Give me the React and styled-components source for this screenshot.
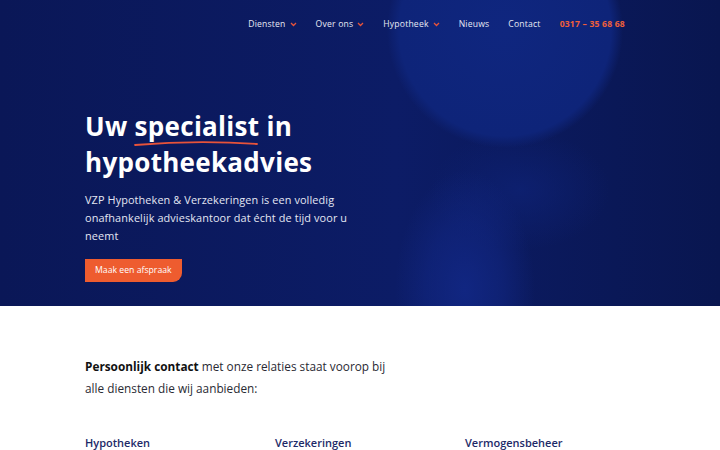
import React from "react";
import styled, { createGlobalStyle } from "styled-components";

const GlobalStyle = createGlobalStyle`
  body {
    margin: 0;
    font-family: "Open Sans", "Noto Sans", sans-serif;
    background: #fff;
  }
`;

const Hero = styled.section`
  height: 306px;
  background:
    radial-gradient(circle at 505px 30px, #0f267f 0, #0e2479 106px, rgba(14, 36, 121, 0) 118px),
    radial-gradient(ellipse 70px 120px at 465px 290px, rgba(18, 40, 135, 0.85) 0, rgba(18, 40, 135, 0.5) 55%, rgba(18, 40, 135, 0) 100%),
    radial-gradient(ellipse 90px 60px at 520px 190px, rgba(14, 34, 118, 0.7) 0, rgba(14, 34, 118, 0) 100%),
    linear-gradient(90deg, #0a1757 0%, #0c1c66 55%, #091650 100%);
  color: #fff;
  overflow: hidden;
`;

const Container = styled.div`
  width: 550px;
  margin: 0 auto;
`;

const Nav = styled.nav`
  display: flex;
  justify-content: flex-end;
  align-items: center;
  gap: 19px;
  height: 48px;
  padding-right: 10px;
  font-size: 8.6px;
`;

const NavItem = styled.a`
  display: flex;
  align-items: center;
  gap: 4px;
  color: ${({ $accent }) => ($accent ? "#f0603a" : "#e8eaf4")};
  font-weight: ${({ $accent }) => ($accent ? 700 : 500)};
  letter-spacing: 0.2px;
  text-decoration: none;
`;

const Chevron = () => (
  <svg width="7" height="5" viewBox="0 0 7 5">
    <path d="M1 1l2.5 2.5L6 1" fill="none" stroke="#e8533a" strokeWidth="1.3" />
  </svg>
);

const Intro = styled.div`
  padding-top: 60px;
`;

const Title = styled.h1`
  margin: 0;
  font-size: 26px;
  line-height: 36px;
  font-weight: 700;
  letter-spacing: 0.3px;
`;

const Marked = styled.span`
  position: relative;
  display: inline-block;

  svg {
    position: absolute;
    left: -2px;
    bottom: -3px;
  }
`;

const Lead = styled.p`
  margin: 11px 0 11px;
  width: 275px;
  font-size: 10.9px;
  line-height: 18px;
  letter-spacing: 0.1px;
  color: #e4e7f3;
`;

const Button = styled.a`
  display: inline-block;
  padding: 0 10px;
  height: 23px;
  line-height: 23px;
  background: #ee5c2f;
  color: #fff;
  font-size: 8.7px;
  font-weight: 500;
  border-radius: 0 0 9px 0;
  text-decoration: none;
`;

const Services = styled.section`
  padding-top: 49px;
`;

const Statement = styled.p`
  margin: 0;
  width: 310px;
  font-size: 11.8px;
  line-height: 22px;
  color: #2a2a33;

  strong {
    font-weight: 700;
    color: #111;
  }
`;

const Columns = styled.div`
  display: grid;
  grid-template-columns: repeat(3, 1fr);
  gap: 20px;
  margin-top: 36px;
`;

const ColumnTitle = styled.h3`
  margin: 0;
  font-size: 11px;
  font-weight: 600;
  color: #1d2a68;
`;

export default function App() {
  return (
    <>
      <GlobalStyle />
      <Hero>
        <Container>
          <Nav>
            <NavItem>Diensten <Chevron /></NavItem>
            <NavItem>Over ons <Chevron /></NavItem>
            <NavItem>Hypotheek <Chevron /></NavItem>
            <NavItem>Nieuws</NavItem>
            <NavItem>Contact</NavItem>
            <NavItem $accent>0317 – 35 68 68</NavItem>
          </Nav>
          <Intro>
            <Title>
              Uw{" "}
              <Marked>
                specialist
                <svg width="126" height="8" viewBox="0 0 126 8">
                  <path d="M2 6 Q63 1 124 5" fill="none" stroke="#e8533a" strokeWidth="1.8" strokeLinecap="round" />
                </svg>
              </Marked>{" "}
              in
              <br />
              hypotheekadvies
            </Title>
            <Lead>
              VZP Hypotheken &amp; Verzekeringen is een volledig onafhankelijk
              advieskantoor dat écht de tijd voor u neemt
            </Lead>
            <Button>Maak een afspraak</Button>
          </Intro>
        </Container>
      </Hero>
      <Services>
        <Container>
          <Statement>
            <strong>Persoonlijk contact</strong> met onze relaties staat voorop
            bij alle diensten die wij aanbieden:
          </Statement>
          <Columns>
            <ColumnTitle>Hypotheken</ColumnTitle>
            <ColumnTitle>Verzekeringen</ColumnTitle>
            <ColumnTitle>Vermogensbeheer</ColumnTitle>
          </Columns>
        </Container>
      </Services>
    </>
  );
}
